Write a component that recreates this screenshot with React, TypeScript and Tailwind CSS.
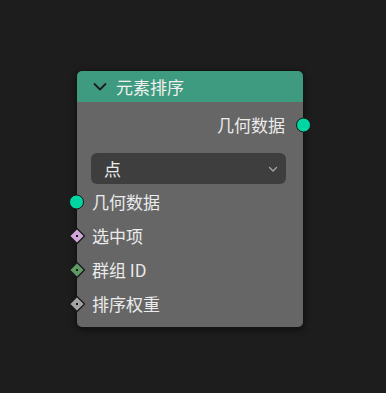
import React from 'react';

const font = { fontFamily: '"Noto Sans CJK SC", "Noto Sans", sans-serif' };

function Diamond({ color }: { color: string }) {
  return (
    <svg width="18" height="18" viewBox="0 0 18 18" className="absolute -left-[9px] top-1/2 -translate-y-1/2">
      <path d="M9 1.5 L16.5 9 L9 16.5 L1.5 9 Z" fill={color} stroke="#1a1a1a" strokeWidth="1.3" />
      <rect x="8" y="8" width="2" height="2" fill="#1a1a1a" />
    </svg>
  );
}

function Circle({ side }: { side: 'left' | 'right' }) {
  return (
    <span
      className={`absolute top-1/2 -translate-y-1/2 w-[15px] h-[15px] rounded-full bg-[#00d6a3] border border-[#161616] ${
        side === 'left' ? '-left-[8px]' : '-right-[8px]'
      }`}
    />
  );
}

export default function App() {
  return (
    <div className="relative w-[386px] h-[393px] bg-[#1d1d1d] overflow-hidden" style={font}>
      <div className="absolute left-[76px] top-[70px] w-[228px] rounded-[6px] border border-[#141414] shadow-[0_2px_6px_rgba(0,0,0,0.5)]">
        <div className="h-[31px] flex items-center pl-[15px] bg-[#3e9b7f] rounded-t-[5px] text-[#f0f0f0] text-[17px]">
          <svg width="16" height="16" viewBox="0 0 16 16" className="mr-[8px]">
            <path d="M2.5 5 L8 10.5 L13.5 5" fill="none" stroke="#1c1c1c" strokeWidth="1.8" strokeLinecap="round" strokeLinejoin="round" />
          </svg>
          <span>元素排序</span>
        </div>
        <div className="bg-[#666666] rounded-b-[5px] pt-[9px] pb-[6px] text-[#ebebeb] text-[17px]">
          <div className="relative h-[28px] flex items-center justify-end pr-[18px]">
            <span>几何数据</span>
            <Circle side="right" />
          </div>
          <div className="ml-[14px] mr-[17px] mt-[14px] h-[31px] rounded-[6px] bg-[#3e3e3e] flex items-center justify-between pl-[13px] pr-[7px]">
            <span>点</span>
            <svg width="12" height="12" viewBox="0 0 12 12">
              <path d="M2.5 4.5 L6 8 L9.5 4.5" fill="none" stroke="#a8a8a8" strokeWidth="1.3" strokeLinecap="round" strokeLinejoin="round" />
            </svg>
          </div>
          <div className="mt-[1px]">
            <div className="relative h-[34px] flex items-center pl-[15px]">
              <Circle side="left" />
              <span>几何数据</span>
            </div>
            <div className="relative h-[34px] flex items-center pl-[15px]">
              <Diamond color="#cfa6d9" />
              <span>选中项</span>
            </div>
            <div className="relative h-[34px] flex items-center pl-[15px]">
              <Diamond color="#5e9a63" />
              <span>群组 ID</span>
            </div>
            <div className="relative h-[34px] flex items-center pl-[15px]">
              <Diamond color="#a3a3a3" />
              <span>排序权重</span>
            </div>
          </div>
        </div>
      </div>
    </div>
  );
}
